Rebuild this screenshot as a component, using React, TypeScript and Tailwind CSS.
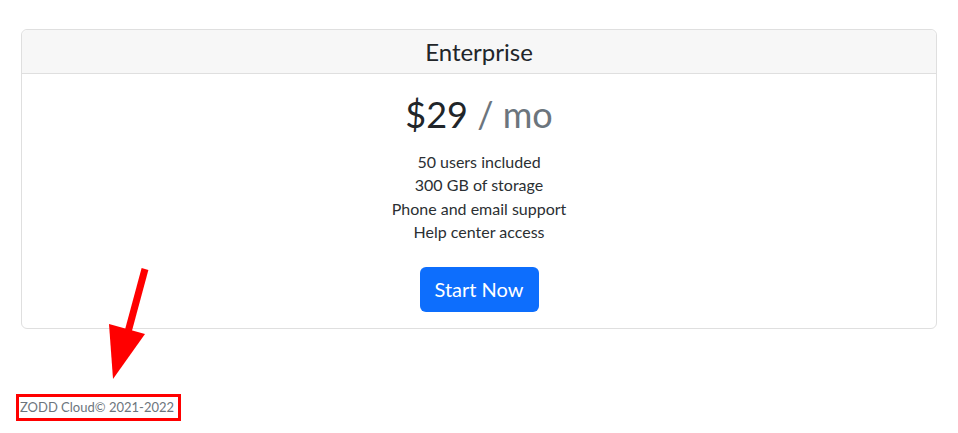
const features = ["50 users included", "300 GB of storage", "Phone and email support", "Help center access"];

const App = () => {
  return (
    <div className="relative min-h-[433px] bg-white font-['Lato','Noto_Sans',sans-serif] text-[#212529]">
      <div className="px-[21px] pt-[29px]">
        <div className="rounded-[6px] border border-[#dfdfdf] text-center">
          <div className="flex h-[44px] items-center justify-center rounded-t-[6px] border-b border-[#dfdfdf] bg-[#f7f7f7]">
            <h4 className="text-[24px] font-normal leading-none">Enterprise</h4>
          </div>
          <div className="px-4 pb-4 pt-[16px]">
            <h1 className="text-[36px] font-normal leading-[48px]">
              $29 <span className="text-[#6c757d]">/ mo</span>
            </h1>
            <ul className="mb-[23px] mt-3 text-[16px] leading-[23.4px] text-[#2b2f33]">
              {features.map((f) => (
                <li key={f}>{f}</li>
              ))}
            </ul>
            <button className="h-[45px] w-[119px] rounded-[6px] bg-[#0d6efd] text-[20px] text-white">Start Now</button>
          </div>
        </div>
      </div>

      <footer className="ml-[16px] mt-[65px] w-fit border-[3px] border-[#ff0000] pl-[1px] pr-[4px]">
        <div className="text-[13px] leading-[21px] text-[#6c757d]">ZODD Cloud© 2021-2022</div>
      </footer>

      <svg className="pointer-events-none absolute left-0 top-0" width="958" height="433">
        <line x1="145" y1="269" x2="128" y2="332" stroke="#ff0000" strokeWidth="7" />
        <polygon points="109,324 145,334 113,379" fill="#ff0000" />
      </svg>
    </div>
  );
};

export default App;
